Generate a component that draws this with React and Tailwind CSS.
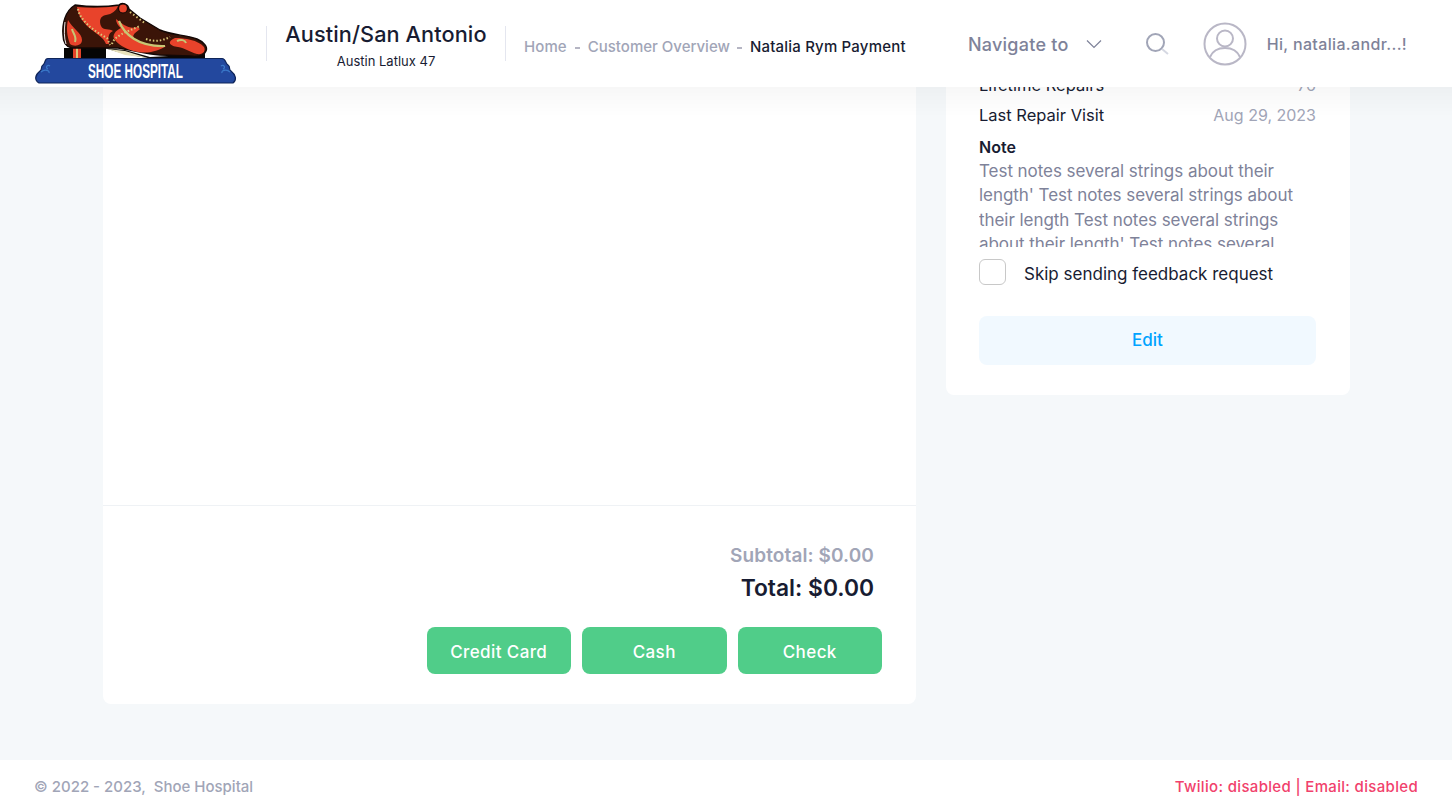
const navy = "text-[#181c32]";

function Logo() {
  return (
    <svg width="260" height="87" viewBox="0 0 260 87" className="absolute left-0 top-0">
      {/* heel + sole */}
      <rect x="64" y="48" width="42" height="11" fill="#050505" />
      <rect x="73" y="48" width="8" height="11" fill="#e2432a" />
      <rect x="76" y="48" width="2" height="11" fill="#d9c77a" />
      <path d="M104 48 L125 50 L150 57 L205 54 L205 59 L153 59 L125 54 Z" fill="#0b0806" />
      <path d="M108 49 L125 51 L148 58 L125 55 Z" fill="#e8e2bd" />
      {/* upper */}
      <path
        d="M75 5 C90 7 105 7 119 5 C122 2 128 4 129 9 L140 18 L160 30 C170 35 188 35 197 39 C204 42 208 47 206 51 C204 56 198 57 190 56 L160 55 C146 54 132 50 118 48 L72 48 C66 47 63 43 63 35 C62 24 65 11 75 5 Z"
        fill="#3b1408"
        stroke="#120705"
        strokeWidth="1.4"
      />
      <path d="M65 22 C64 30 64 38 66 44" fill="none" stroke="#e6e6e6" strokeWidth="1" />
      {/* red panels */}
      <path d="M77 7 C90 8 105 8 118 6 C116 11 112 14 106 15 C100 16 99 21 101 26 C103 31 110 28 113 31 C108 33 108 38 109 44 L106 44 C104 38 98 35 92 30 C84 24 78 16 77 7 Z" fill="#e8432b" />
      <path d="M68 20 C72 28 82 33 82 40 C82 46 74 47 70 44 C67 36 66 28 68 20 Z" fill="#e8432b" />
      <path d="M116 19 C122 24 130 30 137 27 L140 29 C134 34 130 36 137 40 C146 46 158 44 166 46 C160 50 150 54 138 52 C128 50 120 46 115 40 C111 36 116 30 121 28 C118 26 116 22 116 19 Z" fill="#e8432b" />
      <path d="M175 38 C185 38 198 40 204 47 C206 51 203 55 197 54 C190 52 185 48 178 47 C170 46 166 42 175 38 Z" fill="#e8432b" />
      <circle cx="123" cy="8.5" r="4.5" fill="#e8432b" stroke="#120705" strokeWidth="1.2" />
      {/* stitching and accents */}
      <path d="M78 9 C80 20 92 30 107 38 L110 45" fill="none" stroke="#d9c77a" strokeWidth="2" strokeDasharray="1.5 2" />
      <path d="M112 44 C114 36 126 32 140 26" fill="none" stroke="#d9c77a" strokeWidth="2" strokeDasharray="1.5 2" />
      <path d="M130 12 L146 24" fill="none" stroke="#d9c77a" strokeWidth="2" strokeDasharray="1.5 2.5" />
      <path d="M119 21 C124 34 138 47 165 46" fill="none" stroke="#c7c774" strokeWidth="2.2" />
      <path d="M72 29 C73 34 77 36 75 42" fill="none" stroke="#c7c774" strokeWidth="2" />
      <path d="M146 39 C154 42 162 41 170 37" fill="none" stroke="#d9c77a" strokeWidth="2" strokeDasharray="1.5 2" />
      <path d="M177 41 C181 39 185 40 186 43" fill="none" stroke="#c7c774" strokeWidth="2" />
      {/* banner */}
      <path
        d="M48 58.5 L222 58.5 C226 58.5 225 63 228 65 C231 67 228 69 231 71 C236 75 237 80 233 83 L39 83 C34 80 35 75 40 71 C43 69 40 67 43 65 C46 63 44 58.5 48 58.5 Z"
        fill="#23489e"
        stroke="#0f2559"
        strokeWidth="1.2"
      />
      <path d="M41 72 C44 69 50 70 49 73 M50 66 C47 64 45 68 48 69" fill="none" stroke="#3a78c9" strokeWidth="1.3" />
      <path d="M230 72 C227 69 221 70 222 73 M221 66 C224 64 226 68 223 69" fill="none" stroke="#3a78c9" strokeWidth="1.3" />
      <text
        x="88"
        y="78"
        textLength="95"
        lengthAdjust="spacingAndGlyphs"
        fill="#fff"
        fontFamily="'Liberation Sans', sans-serif"
        fontWeight="700"
        fontSize="21"
      >
        SHOE HOSPITAL
      </text>
    </svg>
  );
}

function Header() {
  return (
    <header className="fixed top-0 left-0 right-0 z-20 h-[87px] bg-white flex items-center pl-[266px] pr-[45px]">
      <Logo />
      <div className="h-[35px] w-[240px] flex border-x border-[#e4e6ef] shrink-0">
        <div className="w-full flex flex-col items-center -mt-[7px]">
          <span className={`text-[21.7px] leading-[30px] font-medium tracking-[0.1px] whitespace-nowrap ${navy}`}>Austin/San Antonio</span>
          <span className={`text-[13px] leading-[18px] mt-[3px] whitespace-nowrap ${navy}`}>Austin Latlux 47</span>
        </div>
      </div>
      <div className="ml-[18px] mt-[8px] flex items-center text-[15px] font-medium whitespace-nowrap">
        <span className="text-[#a1a5b7] tracking-[0.1px]">Home</span>
        <span className="w-[5px] h-[2px] bg-[#b5b5c3] mx-[8px]" />
        <span className="text-[#a1a5b7]">Customer Overview</span>
        <span className="w-[5px] h-[2px] bg-[#b5b5c3] ml-[7px] mr-[8px]" />
        <span className={`tracking-[0.2px] ${navy}`}>Natalia Rym Payment</span>
      </div>
      <div className="ml-auto flex items-center whitespace-nowrap">
        <span className="text-[18px] tracking-[0.25px] mt-[1px] text-[#7e8299] font-medium">Navigate to</span>
        <svg width="16" height="10" viewBox="0 0 16 10" className="ml-[17px]" fill="none" stroke="#7e8299" strokeWidth="1.2">
          <path d="M1 1.5 L8 8.5 L15 1.5" />
        </svg>
        <svg width="24" height="24" viewBox="0 0 24 24" className="ml-[43px]" fill="none" strokeWidth="2">
          <circle cx="10.5" cy="10.5" r="8.5" stroke="#a1a5b7" />
          <path d="M17 17 L23 22" stroke="#d5d8e2" />
        </svg>
        <svg width="44" height="44" viewBox="0 0 44 44" className="ml-[34px]" fill="none" stroke="#b9b7c6" strokeWidth="2">
          <circle cx="22" cy="22" r="20.5" />
          <circle cx="22" cy="16.5" r="8" />
          <path d="M7 35 C10 28 16 26 22 26 C28 26 34 28 37 35" />
        </svg>
        <span className="ml-[20px] text-[16px] tracking-[0.35px] font-medium text-[#7e8299]">Hi, natalia.andr...!</span>
      </div>
    </header>
  );
}

function LeftCard() {
  return (
    <section className="w-[813px] h-[704px] bg-white rounded-b-lg flex flex-col justify-end">
      <div className="h-[199px] border-t border-[#eff2f5] flex flex-col items-end pr-[34px] pt-[36px]">
        <div className="pr-[8px] text-right">
          <p className="text-[19px] tracking-[0.1px] leading-[27px] font-semibold text-[#a1a5b7]">Subtotal: $0.00</p>
          <p className={`text-[22.8px] leading-[34px] font-semibold mt-[2px] ${navy}`}>Total: $0.00</p>
        </div>
        <div className="flex gap-[11px] mt-[22px]">
          {["Credit Card", "Cash", "Check"].map((label) => (
            <button key={label} className="w-[144.5px] h-[47px] pt-[5px] bg-[#50cd89] text-white rounded-lg text-[17px] tracking-[0.4px] font-medium">
              {label}
            </button>
          ))}
        </div>
      </div>
    </section>
  );
}

function RightCard() {
  const note = [
    "Test notes several strings about their",
    "length' Test notes several strings about",
    "their length Test notes several strings",
    "about their length' Test notes several",
  ];
  return (
    <aside className="w-[404px] h-[395px] bg-white rounded-b-lg pl-[33px] pr-[34px] pt-[70px]">
      <div className="flex justify-between h-[30px] items-center text-[16px]">
        <span className={`text-[16.5px] ${navy}`}>Lifetime Repairs</span>
        <span className="text-[#a1a5b7]">76</span>
      </div>
      <div className="flex justify-between h-[30px] items-center text-[16px]">
        <span className={`text-[16.5px] ${navy}`}>Last Repair Visit</span>
        <span className="text-[#a1a5b7]">Aug 29, 2023</span>
      </div>
      <p className={`text-[16px] font-semibold leading-[24px] mt-[5px] ${navy}`}>Note</p>
      <div className="h-[88px] overflow-hidden text-[17px] tracking-[-0.05px] leading-[24.4px] text-[#7e8299]">
        {note.map((line) => (
          <div key={line} className="whitespace-nowrap">{line}</div>
        ))}
      </div>
      <label className="flex items-center h-[26px] mt-[12px]">
        <span className="w-[27px] h-[26px] border border-[#c8c8c8] rounded-md bg-white shrink-0" />
        <span className={`ml-[18px] h-[26px] leading-[30px] text-[17px] ${navy}`}>Skip sending feedback request</span>
      </label>
      <button className="w-full h-[49px] mt-[31px] rounded-lg bg-[#f1f9ff] text-[#00a3ff] text-[17px] font-medium">
        Edit
      </button>
    </aside>
  );
}

export default function App() {
  return (
    <div className="h-[812px] overflow-hidden flex flex-col bg-[#f5f8fa] font-['Inter',sans-serif]">
      <Header />
      <div className="fixed top-[87px] left-0 right-0 h-[30px] z-10 pointer-events-none bg-gradient-to-b from-[#00000008] to-transparent" />
      <main className="h-[760px] flex gap-[30px] pl-[103px] shrink-0">
        <LeftCard />
        <RightCard />
      </main>
      <footer className="h-[52px] bg-white flex items-center justify-between pl-[34px] pr-[34px] pt-[2px] text-[15px]">
        <span className="text-[#a1a5b7] font-medium whitespace-pre">© 2022 - 2023,  Shoe Hospital</span>
        <span className="text-[#f1416c] font-medium tracking-[0.33px]">Twilio: disabled | Email: disabled</span>
      </footer>
    </div>
  );
}
